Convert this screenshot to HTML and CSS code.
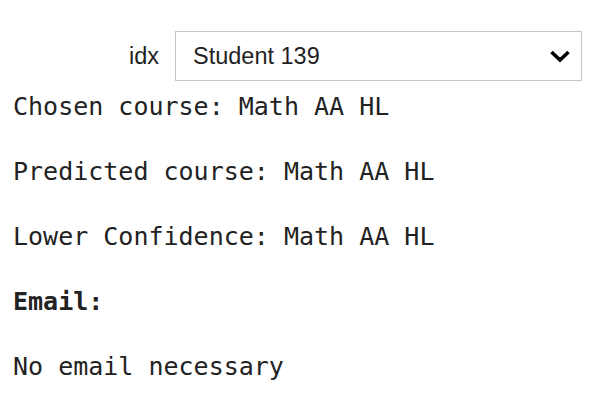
FILE: index.html
```html
<!DOCTYPE html>
<html>
<head>
<meta charset="utf-8">
<link rel="stylesheet" href="styles.css">
</head>
<body>
<div class="page">
  <div class="widget">
    <label class="wlabel">idx</label>
    <div class="select">
      <span class="value">Student 139</span>
      <svg class="chev" width="22" height="14" viewBox="0 0 22 14"><polyline points="2.5,3 11,11 19.5,3" fill="none" stroke="#000" stroke-width="3.6" stroke-linecap="butt" stroke-linejoin="miter"/></svg>
    </div>
  </div>
  <div class="output">
    <p class="line">Chosen course: Math AA HL</p>
    <p class="line">Predicted course: Math AA HL</p>
    <p class="line">Lower Confidence: Math AA HL</p>
    <p class="line bold">Email:</p>
    <p class="line">No email necessary</p>
  </div>
</div>
</body>
</html>
```
FILE: styles.css
```css
html, body {
  margin: 0;
  padding: 0;
  background: #fff;
}
.page {
  padding-top: 31px;
}
.widget {
  display: flex;
  align-items: center;
  height: 50px;
}
.wlabel {
  width: 159px;
  text-align: right;
  margin-right: 16px;
  font-family: "Liberation Sans", Arial, sans-serif;
  font-size: 23.5px;
  color: #1f1f1f;
}
.select {
  box-sizing: border-box;
  width: 407px;
  height: 50px;
  border: 1.5px solid #c6c6c6;
  display: flex;
  align-items: center;
  justify-content: space-between;
  padding: 0 10px 0 17px;
}
.value {
  font-family: "Liberation Sans", Arial, sans-serif;
  font-size: 23.5px;
  color: #1f1f1f;
}
.chev {
  display: block;
}
.output {
  padding-left: 13px;
  padding-top: 10px;
}
.line {
  margin: 0 0 32.5px 0;
  font-family: "DejaVu Sans Mono", Menlo, monospace;
  font-size: 25px;
  line-height: 32.5px;
  color: #222;
  white-space: pre;
}
.bold {
  font-weight: bold;
}
```
